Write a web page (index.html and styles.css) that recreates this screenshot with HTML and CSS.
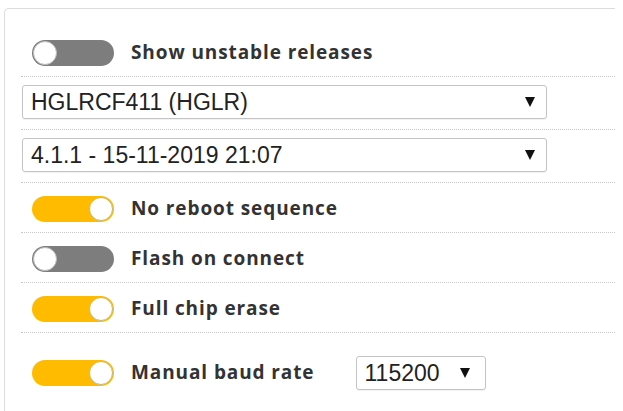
FILE: index.html
```html
<!DOCTYPE html>
<html>
<head>
<meta charset="utf-8">
<link rel="stylesheet" href="styles.css">
</head>
<body>
<div class="panel">
  <div class="row row-first">
    <span class="toggle"><span class="knob"></span></span>
    <span class="label">Show unstable releases</span>
  </div>
  <div class="row row-select">
    <div class="select wide"><span class="value">HGLRCF411 (HGLR)</span><span class="arrow"></span></div>
  </div>
  <div class="row row-select">
    <div class="select wide"><span class="value">4.1.1 - 15-11-2019 21:07</span><span class="arrow"></span></div>
  </div>
  <div class="row">
    <span class="toggle on"><span class="knob"></span></span>
    <span class="label">No reboot sequence</span>
  </div>
  <div class="row">
    <span class="toggle"><span class="knob"></span></span>
    <span class="label">Flash on connect</span>
  </div>
  <div class="row">
    <span class="toggle on"><span class="knob"></span></span>
    <span class="label">Full chip erase</span>
  </div>
  <div class="row row-last">
    <span class="toggle on"><span class="knob"></span></span>
    <span class="label">Manual baud rate</span>
    <div class="select baud"><span class="value">115200</span><span class="arrow"></span></div>
  </div>
</div>
</body>
</html>
```
FILE: styles.css
```css
html, body {
  margin: 0;
  padding: 0;
  background: #ffffff;
}
.panel {
  margin: 8px 0 0 4px;
  width: 611px;
  height: 420px;
  border: 1px solid #dcdcdc;
  border-right: none;
  border-bottom: none;
  border-radius: 5px 0 0 0;
  padding: 21px 0 0 16px;
  box-sizing: border-box;
}
.row {
  display: flex;
  align-items: center;
  padding: 13px 0 10px 0;
  border-bottom: 1px dotted #c8c8c8;
}
.row-first {
  padding-top: 10px;
}
.row-select {
  padding: 8px 0 10px 1px;
}
.row-last {
  border-bottom: none;
  padding-top: 23px;
}
.toggle {
  box-sizing: border-box;
  width: 82px;
  height: 26px;
  border-radius: 13px;
  background: #7d7d7d;
  margin-left: 11px;
  display: flex;
  align-items: center;
  padding: 0 1px;
  flex: none;
}
.toggle.on {
  background: #ffbb00;
  justify-content: flex-end;
}
.knob {
  box-sizing: border-box;
  width: 24px;
  height: 24px;
  border-radius: 50%;
  background: #ffffff;
  border: 1px solid #b9b9b9;
}
.toggle.on .knob {
  border-color: #c9b86a;
}
.label {
  margin-left: 17px;
  font-family: "Open Sans", sans-serif;
  font-weight: 700;
  font-size: 19px;
  letter-spacing: 0.9px;
  line-height: 26px;
  color: #333333;
  margin-top: -3px;
}
.select {
  box-sizing: border-box;
  height: 34px;
  border: 1px solid #c4c4c4;
  border-radius: 3px;
  display: flex;
  align-items: center;
  justify-content: space-between;
  font-family: "Liberation Sans", Arial, sans-serif;
  font-size: 23px;
  color: #222222;
  padding: 0 11px 0 8px;
  box-shadow: 0 1px 1px rgba(0,0,0,0.06);
}
.wide {
  width: 525px;
}
.baud {
  width: 130px;
  margin-left: 41px;
  padding-right: 15px;
}
.arrow {
  width: 0;
  height: 0;
  border-left: 5px solid transparent;
  border-right: 5px solid transparent;
  border-top: 10px solid #111111;
}
```
